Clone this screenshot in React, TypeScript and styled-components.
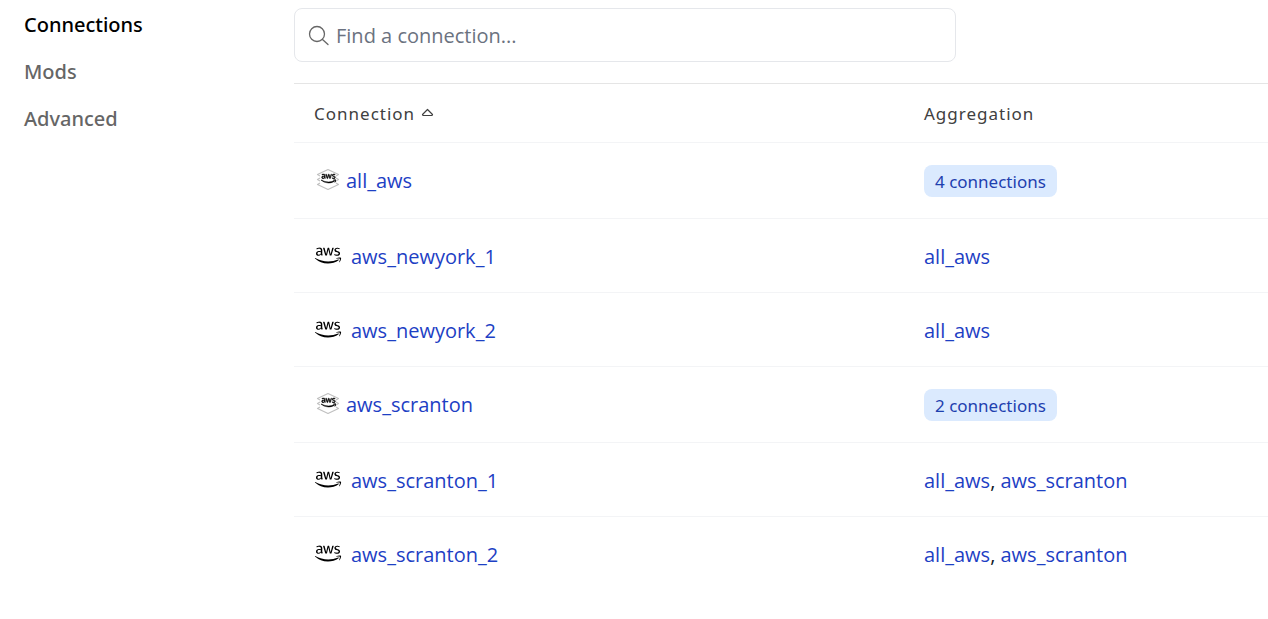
import React from "react";
import styled, { createGlobalStyle } from "styled-components";
import { FaAws } from "react-icons/fa";

const headingFont = `"Noto Sans", "Open Sans", sans-serif`;

const GlobalStyle = createGlobalStyle`
  *, *::before, *::after { box-sizing: border-box; }
  body {
    margin: 0;
    background: #fff;
    color: #111827;
    font-family: "Open Sans", "Noto Sans", sans-serif;
    font-size: 20px;
    line-height: 30px;
  }
`;

const Page = styled.div`
  display: grid;
  grid-template-columns: 270px minmax(0, 1fr);
  padding: 8px 0 0 24px;
`;

const SideNav = styled.nav`
  display: flex;
  flex-direction: column;
  align-items: flex-start;
  gap: 13px;
  font-family: ${headingFont};
`;

const NavLink = styled.a<{ $active?: boolean }>`
  color: ${(p) => (p.$active ? "#000" : "#666")};
  font-weight: 500;
  line-height: 34px;
  text-decoration: none;
`;

const Main = styled.main`
  min-width: 0;
`;

const SearchBox = styled.label`
  display: flex;
  align-items: center;
  gap: 6px;
  width: 68%;
  height: 54px;
  padding: 1px 13px 0;
  border: 1px solid #e5e7eb;
  border-radius: 8px;
`;

const SearchInput = styled.input`
  flex: 1;
  min-width: 0;
  padding: 0;
  border: 0;
  outline: 0;
  background: transparent;
  color: inherit;
  font: inherit;
  &::placeholder {
    color: #6b7280;
    opacity: 1;
  }
`;

const Table = styled.table`
  width: 100%;
  margin-top: 21px;
  border-collapse: separate;
  border-spacing: 0;
  border-top: 1px solid #e5e5e5;
  table-layout: fixed;
`;

const HeadCell = styled.th<{ $wide?: boolean }>`
  width: ${(p) => (p.$wide ? "610px" : "auto")};
  padding: 15px 20px 13px;
  border-bottom: 1px solid #f3f4f6;
  color: #404040;
  font-family: ${headingFont};
  font-size: 17px;
  font-weight: 400;
  letter-spacing: 1px;
  text-align: left;
`;

const SortButton = styled.button`
  display: flex;
  align-items: center;
  gap: 6px;
  padding: 0;
  border: 0;
  background: none;
  color: inherit;
  font: inherit;
  letter-spacing: inherit;
  cursor: pointer;
`;

const Row = styled.tr<{ $aggregator: boolean }>`
  & > td {
    padding: ${(p) => (p.$aggregator ? "22px 20px 21px" : "23px 20px 20px")};
  }
  &:not(:last-child) > td {
    border-bottom: 1px solid #f3f4f6;
  }
`;

const Connection = styled.div<{ $gap: number }>`
  display: flex;
  align-items: center;
  gap: ${(p) => p.$gap}px;
`;

const Link = styled.a`
  color: #1d40c4;
  text-decoration: none;
`;

const Pill = styled.span`
  display: block;
  width: fit-content;
  padding: 2px 11px 0;
  border-radius: 8px;
  background: #dbeafe;
  color: #1e40af;
  font-family: ${headingFont};
  font-size: 17px;
`;

const AwsMark = styled(FaAws)`
  flex: none;
  width: 28px;
  height: 21px;
  margin-bottom: 4px;
  color: #000;
`;

const StackIcon = styled.svg`
  flex: none;
  width: 28px;
  height: 24px;
  margin-bottom: 2px;
`;

function AggregatorIcon() {
  return (
    <StackIcon viewBox="0 0 28 24" fill="none" aria-hidden="true">
      <g stroke="#c0c0c0" strokeWidth="1.200" strokeLinejoin="round">
        <path d="M6 8 3.500 6.500 14 1.500 24.500 6.500 22 8" />
        <path d="M6 13 3.500 11.500 6 10M22 13 24.500 11.500 22 10" />
        <path d="M6 15 3.500 16.500 14 21.500 24.500 16.500 22 15" />
      </g>
      <FaAws x="7" y="3" size={15} color="#000" stroke="#000" strokeWidth="18" />
    </StackIcon>
  );
}

function SearchIcon() {
  return (
    <svg width="22" height="22" viewBox="0 0 22 22" fill="none" stroke="#666" strokeWidth="1.300" strokeLinecap="round" aria-hidden="true">
      <circle cx="9" cy="9" r="7.500" />
      <path d="M14.500 14.500 20 19.500" />
    </svg>
  );
}

function SortIcon() {
  return (
    <svg width="13" height="12" viewBox="0 0 13 12" fill="none" stroke="#404040" strokeWidth="1.200" strokeLinejoin="round" aria-hidden="true">
      <path d="M1.500 6.500 6.500 1.500 11.500 6.500 11 7.500H2Z" />
    </svg>
  );
}

type Item = { name: string; count?: number; parents?: string[] };

const items: Item[] = [
  { name: "all_aws", count: 4 },
  { name: "aws_newyork_1", parents: ["all_aws"] },
  { name: "aws_newyork_2", parents: ["all_aws"] },
  { name: "aws_scranton", count: 2 },
  { name: "aws_scranton_1", parents: ["all_aws", "aws_scranton"] },
  { name: "aws_scranton_2", parents: ["all_aws", "aws_scranton"] },
];

export default function App() {
  return (
    <>
      <GlobalStyle />
      <Page>
        <SideNav aria-label="Settings">
          <NavLink href="#connections" $active aria-current="page">Connections</NavLink>
          <NavLink href="#mods">Mods</NavLink>
          <NavLink href="#advanced">Advanced</NavLink>
        </SideNav>
        <Main>
          <SearchBox>
            <SearchIcon />
            <SearchInput type="text" placeholder="Find a connection..." aria-label="Find a connection" />
          </SearchBox>
          <Table>
            <thead>
              <tr>
                <HeadCell $wide scope="col" aria-sort="ascending">
                  <SortButton type="button">
                    Connection
                    <SortIcon />
                  </SortButton>
                </HeadCell>
                <HeadCell scope="col">Aggregation</HeadCell>
              </tr>
            </thead>
            <tbody>
              {items.map((item) => (
                <Row key={item.name} $aggregator={Boolean(item.count)}>
                  <td>
                    <Connection $gap={item.count ? 4 : 9}>
                      {item.count ? <AggregatorIcon /> : <AwsMark aria-hidden="true" />}
                      <Link href={`#${item.name}`}>{item.name}</Link>
                    </Connection>
                  </td>
                  <td>
                    {item.count && <Pill>{item.count} connections</Pill>}
                    {item.parents?.map((parent, i) => (
                      <React.Fragment key={parent}>
                        {i > 0 && ", "}
                        <Link href={`#${parent}`}>{parent}</Link>
                      </React.Fragment>
                    ))}
                  </td>
                </Row>
              ))}
            </tbody>
          </Table>
        </Main>
      </Page>
    </>
  );
}
